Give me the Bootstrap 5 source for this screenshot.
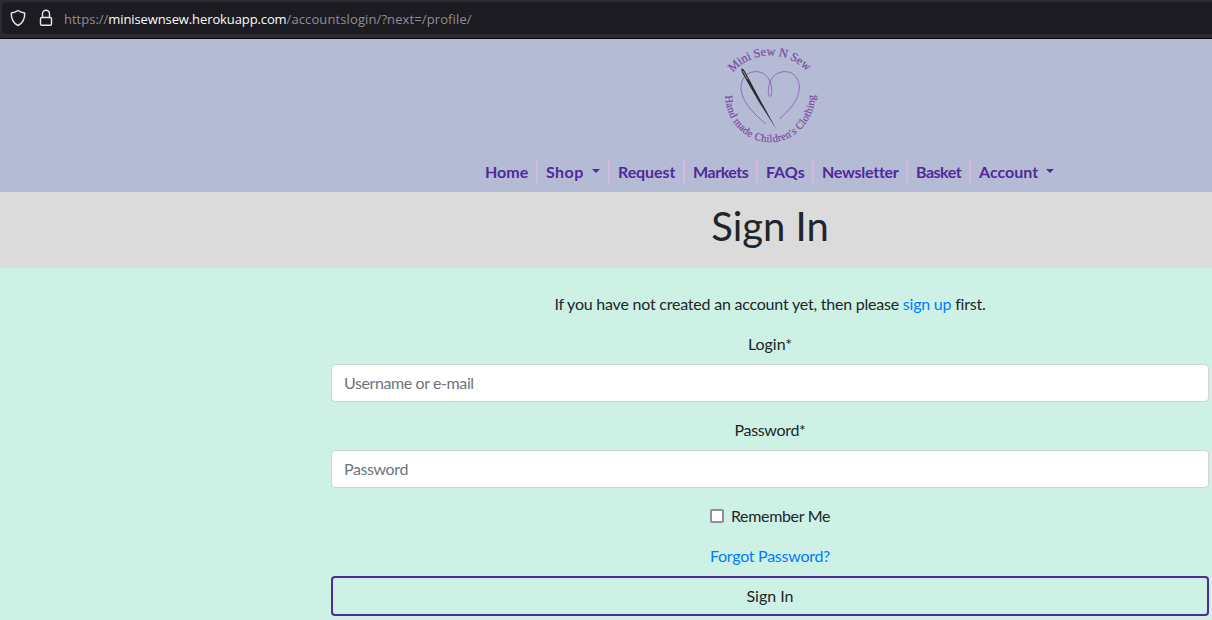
<!DOCTYPE html>
<html lang="en">
<head>
<meta charset="utf-8">
<meta name="viewport" content="width=device-width, initial-scale=1">
<title>Mini Sew N Sew - Sign In</title>
<link href="https://cdn.jsdelivr.net/npm/bootstrap@5.3.0/dist/css/bootstrap.min.css" rel="stylesheet">
<style>
  html, body { height: 620px; overflow: hidden; }
  body { background: #cdf1e4; color: #212529; font-family: Lato, sans-serif; font-size: 16px; }
  a { color: #007bff; text-decoration: none; }
  .browser-bar { height: 39px; background: #2b2a33; border-bottom: 1px solid #08070c; padding: 2px 0 4px 2px; }
  .url-field { height: 32px; background: #1c1b22; border-radius: 4px 0 0 4px; padding-left: 7px; font: 13px/32px "Open Sans", sans-serif; color: #8f8f96; }
  .url-field svg { flex: none; }
  .url-text { margin-left: 7px; padding-top: 1px; }
  .url-host { color: #fbfbfe; letter-spacing: -.11px; }
  .url-path { letter-spacing: .11px; }
  .page-shell > header, .page-shell > .title-band, .page-shell > .form-area { padding-left: 328px; }
  .site-header { height: 153px; background: #b5bad5; }
  .brand-logo { width: 110px; height: 115px; }
  .menu-link { height: 24px; line-height: 24px; padding: 0 0 0 8px; color: #4f2a9b; font-weight: 700; border-right: 2px solid #d5b8e2; white-space: nowrap; }
  .menu-link:last-child { border-right: 0; }
  .menu-link.dropdown-toggle::after { margin-left: 8px; vertical-align: 5px; }
  .w-home { width: 61px; }
  .w-shop { width: 72px; letter-spacing: .45px; }
  .w-request { width: 75px; letter-spacing: -.1px; }
  .w-markets { width: 73px; letter-spacing: -.45px; }
  .w-faqs { width: 56px; }
  .w-news { width: 94px; letter-spacing: -.25px; }
  .w-basket { width: 63px; letter-spacing: -.5px; }
  .w-account { width: 92px; }
  .title-band { height: 76px; background: #dbdbdb; padding-top: 10px; }
  .title-band h1 { font-size: 40px; line-height: 48px; font-weight: 400; }
  .login-form { width: 878px; padding-top: 24px; }
  .tight { letter-spacing: -.27px; }
  .lead-in { letter-spacing: -.22px; }
  .tighter { letter-spacing: -.33px; }
  .login-form .form-control { height: 38px; padding: 5px 12px 7px; border-color: #ced4da; border-radius: 4px; color: #495057; letter-spacing: -.4px; }
  .form-control::placeholder { color: #6c757d; }
  .remember-box { appearance: none; width: 14px; height: 14px; background: #fff; border: 2px solid #8f8f9d; border-radius: 2px; margin: 0 7px 0 0; }
  .btn-outline-sew { height: 40px; border: 2px solid #4f2a9b; border-radius: 4px; color: #212529; padding: 0; }
</style>
</head>
<body>
<div class="browser-bar">
  <div class="url-field d-flex align-items-center">
    <svg width="18" height="18" viewBox="0 0 18 18" fill="none" stroke="#e9e9ee" stroke-width="1.4" stroke-linejoin="round"><path d="M9 1.5C7.2 2.8 4.8 3.7 2.3 4C2.1 9.2 3.7 13.9 9 16.5C14.3 13.9 15.9 9.2 15.7 4C13.2 3.7 10.8 2.8 9 1.5Z"/></svg>
    <svg class="ms-2" width="22" height="20" viewBox="0 0 22 20" fill="none" stroke="#e9e9ee" stroke-width="1.4"><rect x="5.5" y="9.5" width="11" height="7.8" rx="1.3"/><path d="M7.5 9.5V5.8a3.5 3.5 0 0 1 7 0V9.5"/></svg>
    <div class="url-text text-nowrap"><span>https://</span><span class="url-host">minisewnsew.herokuapp.com</span><span class="url-path">/accountslogin/?next=/profile/</span></div>
  </div>
</div>
<div class="page-shell">
  <header class="site-header d-flex flex-column align-items-center">
    <svg class="brand-logo" viewBox="0 3 330 345" fill="none">
      <defs>
        <path id="arcTop" d="M53 104A150 150 0 0 1 279 104"/>
        <path id="arcBottom" d="M31 173A134.5 142 0 0 0 300 168"/>
      </defs>
      <g fill="#784aa2" font-family="Liberation Serif, serif" stroke="#784aa2" stroke-width=".5">
        <text font-size="37"><textPath href="#arcTop" textLength="250">Mini Sew N Sew</textPath></text>
        <text font-size="32"><textPath href="#arcBottom" textLength="431">Hand made Children's Clothing</textPath></text>
      </g>
      <path d="M153 258C112 224 78 187 78 148C78 113 104 99 127 101C148 103 163 119 168 140C172 158 171 175 165 175C158 175 159 156 163 139C168 116 188 100 212 101C237 102 254 122 253 150C252 187 224 215 194 242" stroke="#8a5cb2" stroke-width="2.5"/>
      <path d="M79 91Q86 92 91 102L137 188L184 274L130 189L85 111Q78 99 79 91Z" fill="#282b30"/>
      <path d="M84 99L98 124" stroke="#a5aac4" stroke-width="2.5"/>
    </svg>
    <nav class="d-flex mt-auto mb-2">
      <a class="menu-link w-home" href="#">Home</a>
      <a class="menu-link w-shop dropdown-toggle" href="#">Shop</a>
      <a class="menu-link w-request" href="#">Request</a>
      <a class="menu-link w-markets" href="#">Markets</a>
      <a class="menu-link w-faqs" href="#">FAQs</a>
      <a class="menu-link w-news" href="#">Newsletter</a>
      <a class="menu-link w-basket" href="#">Basket</a>
      <a class="menu-link w-account dropdown-toggle" href="#">Account</a>
    </nav>
  </header>
  <div class="title-band text-center"><h1 class="m-0">Sign In</h1></div>
  <div class="form-area">
  <form class="login-form mx-auto text-center">
    <p class="mb-3 lead-in">If you have not created an account yet, then please <a href="#">sign up</a> first.</p>
    <label class="d-block mb-2" for="login">Login*</label>
    <input class="form-control" id="login" type="text" placeholder="Username or e-mail">
    <label class="d-block mt-3 mb-2 tighter" for="password">Password*</label>
    <input class="form-control" id="password" type="password" placeholder="Password">
    <div class="d-flex justify-content-center align-items-center mt-3 mb-3 tighter">
      <input class="remember-box" id="remember" type="checkbox"><label for="remember">Remember Me</label>
    </div>
    <a class="d-block mb-2 tight" href="#">Forgot Password?</a>
    <button class="btn btn-outline-sew w-100 d-block" type="button">Sign In</button>
  </form>
  </div>
</div>
<script src="https://cdn.jsdelivr.net/npm/bootstrap@5.3.0/dist/js/bootstrap.bundle.min.js"></script>
</body>
</html>
